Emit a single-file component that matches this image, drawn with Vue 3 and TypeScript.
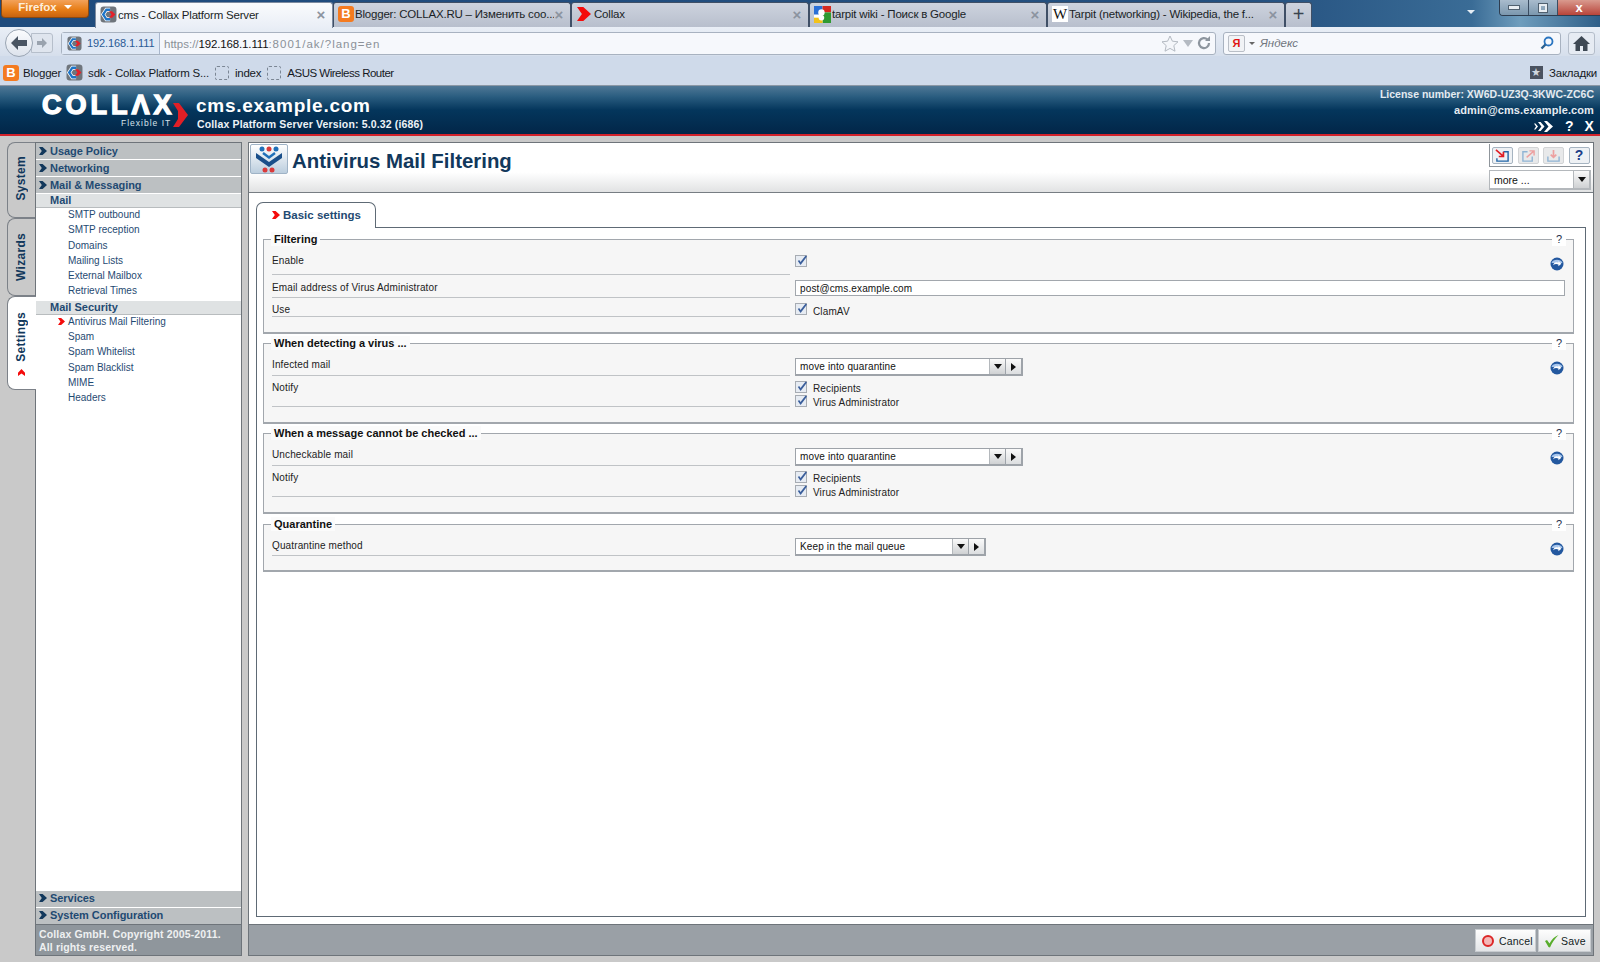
<script setup lang="ts">
interface Row { label: string; h: number; pad: number; type: string; value?: string; width?: number; top?: number }
interface Group { title: string; height: number; gap: number; rows: Row[] }
const browserTabs = [
  { title: 'cms - Collax Platform Server', icon: 'collax', active: true },
  { title: 'Blogger: COLLAX.RU – Изменить соо...', icon: 'blogger', active: false },
  { title: 'Collax', icon: 'red', active: false },
  { title: 'tarpit wiki - Поиск в Google', icon: 'google', active: false },
  { title: 'Tarpit (networking) - Wikipedia, the f...', icon: 'wiki', active: false },
]
const mailItems = ['SMTP outbound', 'SMTP reception', 'Domains', 'Mailing Lists', 'External Mailbox', 'Retrieval Times']
const securityItems = ['Antivirus Mail Filtering', 'Spam', 'Spam Whitelist', 'Spam Blacklist', 'MIME', 'Headers']
const groups: Group[] = [
  { title: 'Filtering', height: 95, gap: 9, rows: [
    { label: 'Enable', h: 35, pad: 15, type: 'check', top: 15 },
    { label: 'Email address of Virus Administrator', h: 23, pad: 7, type: 'input', value: 'post@cms.example.com', top: 5 },
    { label: 'Use', h: 19, pad: 6, type: 'checks', top: 6 },
  ] },
  { title: 'When detecting a virus ...', height: 81, gap: 9, rows: [
    { label: 'Infected mail', h: 32, pad: 15, type: 'select', value: 'move into quarantine', width: 228, top: 14 },
    { label: 'Notify', h: 31, pad: 6, type: 'notify', top: 5 },
  ] },
  { title: 'When a message cannot be checked ...', height: 81, gap: 10, rows: [
    { label: 'Uncheckable mail', h: 32, pad: 15, type: 'select', value: 'move into quarantine', width: 228, top: 14 },
    { label: 'Notify', h: 31, pad: 6, type: 'notify', top: 5 },
  ] },
  { title: 'Quarantine', height: 48, gap: 0, rows: [
    { label: 'Quatrantine method', h: 31, pad: 15, type: 'select', value: 'Keep in the mail queue', width: 191, top: 13 },
  ] },
]
</script>

<template>
  <div class="page">
    <svg class="defs" width="0" height="0">
      <symbol id="fav" viewBox="0 0 16 16">
        <rect x="0.5" y="0.5" width="15" height="15" rx="3" fill="#6f757c" />
        <path d="M9.500 3.500H6L3 8l3 4.500h3.500" fill="none" stroke="#fff" stroke-width="3.600" />
        <path d="M9.500 3.500H6L3 8l3 4.500h3.500" fill="none" stroke="#1c74c8" stroke-width="2.200" />
        <path d="M8.500 5h3L14.500 8l-3 3h-3L10.800 8z" fill="#e5202a" />
      </symbol>
      <symbol id="chev" viewBox="0 0 10 10">
        <path d="M0 0h4.500L10 5 4.500 10H0L3.500 5z" />
      </symbol>
      <symbol id="refresh" viewBox="0 0 14 14">
        <circle cx="7" cy="7" r="6.500" fill="#23589f" />
        <path d="M1.500 6C2.500 2 11 1.500 12.500 6z" fill="#a8c6ec" />
        <path d="M3.200 8.200C3.500 5.500 6.500 4.600 8.400 5.800V4.300l3 2.500-3 2.500V7.600C6.700 6.500 4.600 6.800 3.200 8.200z" fill="#fff" />
      </symbol>
      <symbol id="tick" viewBox="0 0 12 12">
        <path d="M2 6.500l1.500-1 1.400 2L10.500 0.500 12 1.500 5 11z" fill="#3b5f9c" />
      </symbol>
    </svg>

    <div class="tabbar">
      <div class="ffbtn"><span>Firefox</span><i class="caret white"></i></div>
      <div v-for="t in browserTabs" :key="t.title" class="btab" :class="{ active: t.active }">
        <svg v-if="t.icon === 'collax'" class="fav" viewBox="0 0 16 16"><use href="#fav" /></svg>
        <span v-else-if="t.icon === 'blogger'" class="blogger">B</span>
        <svg v-else-if="t.icon === 'red'" class="fav redc" viewBox="0 0 10 10" fill="#f40c0c"><use href="#chev" /></svg>
        <svg v-else-if="t.icon === 'google'" class="fav" viewBox="0 0 16 16">
          <rect width="16" height="16" rx="2" fill="#fff" />
          <rect x="0" y="0" width="8" height="8" fill="#2a6fd6" />
          <rect x="8" y="0" width="8" height="6" fill="#d62a20" />
          <rect x="8" y="6" width="8" height="10" fill="#2f9a32" />
          <rect x="0" y="11" width="8" height="5" fill="#f2c21a" />
          <circle cx="7" cy="6" r="3" fill="#fff" />
          <circle cx="7" cy="11" r="2.600" fill="#fff" />
        </svg>
        <span v-else class="wiki">W</span>
        <span class="btitle">{{ t.title }}</span>
        <span class="bclose">×</span>
      </div>
      <div class="newtab">+</div>
      <div class="tabspace"><i class="caret pale"></i></div>
      <div class="winbtns">
        <div class="wb"><i class="wmin"></i></div>
        <div class="wb"><i class="wmax"></i></div>
        <div class="wb close">x</div>
      </div>
    </div>

    <div class="navbar">
      <div class="navbtns">
        <div class="backbtn">
          <svg width="18" height="16" viewBox="0 0 18 16"><path d="M1 8l7-7v4h9v6H8v4z" fill="#4a5563" /></svg>
        </div>
        <div class="fwdbtn">
          <svg width="12" height="12" viewBox="0 0 12 12"><path d="M11 6L6 1v3H1v4h5v3z" fill="#9aa3ae" /></svg>
        </div>
      </div>
      <div class="urlbar">
        <div class="identity">
          <svg class="fav" viewBox="0 0 16 16"><use href="#fav" /></svg>
          <span>192.168.1.111</span>
        </div>
        <div class="url">https://<b>192.168.1.111</b><span class="tail">:8001/ak/?lang=en</span></div>
        <svg class="star" width="18" height="17" viewBox="0 0 18 17"><path d="M9 1l2.400 5.200 5.600.6-4.200 3.800 1.200 5.600L9 13.400 4 16.200l1.200-5.600L1 6.800l5.600-.6z" fill="#f4f6fa" stroke="#b4bac2" /></svg>
        <i class="caret urlcaret"></i>
        <svg class="reload" width="14" height="14" viewBox="0 0 14 14"><path d="M12 7a5 5 0 1 1-1.500-3.500" fill="none" stroke="#8d959e" stroke-width="2.200" /><path d="M8 5h5V0z" fill="#8d959e" /></svg>
      </div>
      <div class="search">
        <div class="yandex">Я</div>
        <i class="caret small"></i>
        <span class="yname">Яндекс</span>
        <svg class="glass" width="14" height="14" viewBox="0 0 14 14"><circle cx="8.500" cy="5.500" r="4" fill="none" stroke="#2a75c0" stroke-width="1.800" /><path d="M5.500 8.500L1.500 12.500" stroke="#2a6090" stroke-width="2.400" /></svg>
      </div>
      <div class="home">
        <svg width="17" height="15" viewBox="0 0 17 15"><path d="M8.500 0L0 8h2.500v7h4.500v-5h3v5h4.500V8H17z" fill="#3e4854" /></svg>
      </div>
    </div>

    <div class="bookbar">
      <span class="blogger bm">B</span><span class="bmtext">Blogger</span>
      <svg class="fav bm2" viewBox="0 0 16 16"><use href="#fav" /></svg><span class="bmtext">sdk - Collax Platform S...</span>
      <i class="dash"></i><span class="bmtext">index</span>
      <i class="dash"></i><span class="bmtext tight">ASUS Wireless Router</span>
      <div class="bmright">
        <span class="bmstar">★</span><span class="bmtext">Закладки</span>
      </div>
    </div>

    <header class="apphead">
      <div class="logo">
        <div class="logotext">COLLΛX</div>
        <div class="flex-it">Flexible IT</div>
        <svg class="logochev" width="15" height="24" viewBox="0 0 15 24"><path d="M0 0h6l9 12-9 12H0l5-8V8z" fill="#e01f26" /></svg>
      </div>
      <div class="hostblock">
        <div class="host">cms.example.com</div>
        <div class="version">Collax Platform Server Version: 5.0.32 (i686)</div>
      </div>
      <div class="headright">
        <div class="lic">License number: XW6D-UZ3Q-3KWC-ZC6C</div>
        <div>admin@cms.example.com</div>
        <div class="headicons">
          <svg width="20" height="11" viewBox="0 0 20 11" fill="#fff">
            <path d="M0 2.500h1.500L4 5.500l-2.500 3H0l2-3z" />
            <path d="M4 1h2.600L10.500 5.500 6.600 10H4L7.400 5.500z" />
            <path d="M10 0h3L19 5.500 13 11h-3L14.500 5.500z" />
          </svg>
          <span>?</span><span>X</span>
        </div>
      </div>
    </header>

    <div class="workspace">
      <div class="vtabs">
        <div class="vtab sys"><span>System</span></div>
        <div class="vtab wiz"><span>Wizards</span></div>
        <div class="vtab set"><span>Settings</span><svg class="vchev" width="7" height="7" viewBox="0 0 10 10" fill="#f40c0c"><use href="#chev" /></svg></div>
      </div>

      <aside class="side">
        <div class="shead"><svg width="8" height="8" viewBox="0 0 10 10" fill="#12385c"><use href="#chev" /></svg>Usage Policy</div>
        <div class="shead"><svg width="8" height="8" viewBox="0 0 10 10" fill="#12385c"><use href="#chev" /></svg>Networking</div>
        <div class="shead"><svg width="8" height="8" viewBox="0 0 10 10" fill="#12385c"><use href="#chev" /></svg>Mail &amp; Messaging</div>
        <div class="ssub">Mail</div>
        <div class="slist">
          <div v-for="i in mailItems" :key="i" class="sitem">{{ i }}</div>
        </div>
        <div class="ssub">Mail Security</div>
        <div class="slist">
          <div v-for="(i, n) in securityItems" :key="i" class="sitem">
            <svg v-if="n === 0" class="ichev" width="7" height="7" viewBox="0 0 10 10" fill="#f40c0c"><use href="#chev" /></svg>{{ i }}
          </div>
        </div>
        <div class="sfill"></div>
        <div class="shead low"><svg width="8" height="8" viewBox="0 0 10 10" fill="#12385c"><use href="#chev" /></svg>Services</div>
        <div class="shead low"><svg width="8" height="8" viewBox="0 0 10 10" fill="#12385c"><use href="#chev" /></svg>System Configuration</div>
        <div class="scopy">Collax GmbH. Copyright 2005-2011.<br />All rights reserved.</div>
      </aside>

      <main class="main">
        <div class="mhead">
          <div class="micon">
            <svg width="32" height="28" viewBox="0 0 32 28">
              <g fill="#1f6fb8"><circle cx="9" cy="4" r="2.500" /><circle cx="23" cy="4" r="2.500" /></g>
              <circle cx="16" cy="4" r="2.500" fill="#d93a3a" />
              <path d="M3 8l13 9 13-9v5L16 22 3 13z" fill="#1a4f8a" />
              <path d="M10 8l6 4.500L22 8" fill="none" stroke="#1f6fb8" stroke-width="2.400" />
              <circle cx="12" cy="25" r="2.500" fill="#d93a3a" /><circle cx="19" cy="25" r="2.500" fill="#d93a3a" />
            </svg>
          </div>
          <h1>Antivirus Mail Filtering</h1>
          <div class="mtools">
            <div class="toolrow">
              <div class="tool">
                <svg width="16" height="15" viewBox="0 0 16 15"><path d="M9 3h5v10H2v-3" fill="none" stroke="#2267a8" stroke-width="1.500" /><path d="M1 1l8 7M9 3v5H4" fill="none" stroke="#e01f26" stroke-width="1.800" /></svg>
              </div>
              <div class="tool dim">
                <svg width="16" height="15" viewBox="0 0 16 15"><path d="M7 3H2v10h10V8" fill="none" stroke="#8fb4d4" stroke-width="1.500" /><path d="M6 9l8-7M9 2h5v5" fill="none" stroke="#eda0a0" stroke-width="1.500" /></svg>
              </div>
              <div class="tool dim">
                <svg width="16" height="15" viewBox="0 0 16 15"><path d="M2 8v5h12V8" fill="none" stroke="#8fb4d4" stroke-width="1.500" /><path d="M8 1v8M5 6l3 3 3-3" fill="none" stroke="#eda0a0" stroke-width="1.800" /></svg>
              </div>
              <div class="tool q">?</div>
            </div>
            <div class="moresel"><span>more ...</span><b class="dropb"><i class="caret black"></i></b></div>
          </div>
        </div>

        <div class="mbody">
          <div class="ptab"><svg width="8" height="8" viewBox="0 0 10 10" fill="#f40c0c"><use href="#chev" /></svg>Basic settings</div>
          <div class="frame">
            <section v-for="g in groups" :key="g.title" class="fs" :style="{ height: g.height + 'px', marginBottom: g.gap + 'px' }">
              <div class="legend">{{ g.title }}</div>
              <div class="fq">?</div>
              <svg class="rf" width="14" height="14" viewBox="0 0 14 14"><use href="#refresh" /></svg>
              <div v-for="r in g.rows" :key="r.label" class="row" :style="{ height: r.h + 'px' }">
                <div class="lab" :style="{ paddingTop: r.pad + 'px' }">{{ r.label }}</div>
                <div class="ctl" :style="{ paddingTop: r.top + 'px' }">
                  <span v-if="r.type === 'check'" class="cb"><svg viewBox="0 0 12 12"><use href="#tick" /></svg></span>
                  <div v-else-if="r.type === 'input'" class="inp">{{ r.value }}</div>
                  <div v-else-if="r.type === 'checks'" class="chk up"><span class="cb"><svg viewBox="0 0 12 12"><use href="#tick" /></svg></span>ClamAV</div>
                  <div v-else-if="r.type === 'select'" class="sel" :style="{ width: r.width + 'px' }">
                    <span class="seltxt">{{ r.value }}</span>
                    <b class="dropb"><i class="caret black"></i></b>
                    <b class="gob"><i class="tri"></i></b>
                  </div>
                  <template v-else>
                    <div class="chk"><span class="cb"><svg viewBox="0 0 12 12"><use href="#tick" /></svg></span>Recipients</div>
                    <div class="chk"><span class="cb"><svg viewBox="0 0 12 12"><use href="#tick" /></svg></span>Virus Administrator</div>
                  </template>
                </div>
              </div>
            </section>
          </div>
        </div>

        <div class="mfoot">
          <div class="fbtn cancel"><i class="redo"></i>Cancel</div>
          <div class="fbtn save">
            <svg width="15" height="14" viewBox="0 0 15 14"><path d="M1 7l2-1 2.500 3.500C7.500 5.500 10.500 2.500 14.500 1 11 4.500 8 8.500 6 13.500L4.500 13z" fill="#58ad2c" /></svg>Save
          </div>
        </div>
      </main>
    </div>
  </div>
</template>

<style scoped>
.page { width: 1600px; height: 962px; display: flex; flex-direction: column; overflow: hidden; background: #c9c9c9; font-family: "Liberation Sans", Arial, sans-serif; color: #222; }
.defs { display: block; height: 0; width: 0; overflow: hidden; flex: none; }
i { display: block; }
.tabbar { height: 27px; flex: none; display: flex; align-items: flex-start; background: linear-gradient(90deg, #1f4b7d 0%, #24507f 78%, #3a6c96 92%, #6f9dbd 95%, #2e5e88 100%); position: relative; }
.ffbtn { width: 88px; height: 18px; margin: 0 6px 0 1px; flex: none; border-radius: 0 0 4px 4px; background: linear-gradient(#f3a25a, #e77e18 55%, #c8630f); border: 1px solid #8a4a12; border-top: 0; box-sizing: border-box; color: #fdeedd; font-size: 11.500px; font-weight: bold; display: flex; align-items: center; justify-content: center; gap: 7px; padding-bottom: 3px; }
.caret { width: 0; height: 0; border-left: 4px solid transparent; border-right: 4px solid transparent; border-top: 4px solid #666; }
.caret.white { border-top-color: #fff; }
.caret.pale { border-top-color: #e6eef5; }
.caret.small { border-left-width: 3px; border-right-width: 3px; border-top-width: 3px; margin: 0 5px 0 4px; }
.caret.black { border-left-width: 4px; border-right-width: 4px; border-top: 5px solid #111; }
.btab { width: 238px; height: 25px; margin-top: 2px; flex: none; box-sizing: border-box; display: flex; align-items: center; padding: 0 5px 2px 4px; font-size: 11.500px; letter-spacing: -0.200px; color: #1a1f26; background: linear-gradient(#cdd3de, #b8bfcd); border: 1px solid #3f4f66; border-bottom: 0; border-radius: 3px 3px 0 0; }
.btab.active { background: linear-gradient(#fafbfd, #e9eef6); height: 26px; border-color: #7d8ba0; }
.btitle { flex: 1; white-space: nowrap; overflow: hidden; margin-left: 1px; }
.bclose { color: #8b93a0; font-size: 15px; font-weight: bold; margin-right: 2px; line-height: 1; }
.fav { width: 17px; height: 17px; flex: none; }
.fav.redc { width: 14px; height: 14px; margin: 0 2px 0 1px; }
.blogger { width: 16px; height: 16px; flex: none; background: #f47b20; border-radius: 3px; color: #fff; font-weight: bold; font-size: 13px; line-height: 16px; text-align: center; letter-spacing: 0; }
.wiki { width: 16px; height: 16px; flex: none; background: #fff; font-family: "Liberation Serif", serif; font-size: 15px; line-height: 16px; text-align: center; color: #111; letter-spacing: 0; }
.newtab { width: 27px; height: 25px; margin-top: 2px; flex: none; box-sizing: border-box; background: linear-gradient(#cdd3de, #b8bfcd); border: 1px solid #3f4f66; border-bottom: 0; border-radius: 3px 3px 0 0; text-align: center; font-size: 20px; line-height: 22px; color: #3a434f; }
.tabspace { flex: 1; display: flex; justify-content: flex-end; padding: 10px 24px 0 0; }
.winbtns { width: 101px; height: 16px; margin-right: 0; flex: none; display: flex; border: 1px solid #2e3d50; border-top: 0; border-right: 0; border-radius: 0 0 0 4px; box-sizing: border-box; overflow: hidden; }
.wb { width: 28px; height: 15px; background: linear-gradient(#a9bccd, #7b97ae); border-right: 1px solid #3a4d62; display: flex; align-items: center; justify-content: center; }
.wb.close { flex: 1; border: 0; background: linear-gradient(#d99a8e, #b8443a); color: #fff; font-weight: bold; font-size: 13px; line-height: 13px; }
.wmin { width: 10px; height: 3px; background: #e8edf2; border: 1px solid #50606f; }
.wmax { width: 8px; height: 8px; border: 2px solid #e8edf2; outline: 1px solid #50606f; box-sizing: border-box; }
.navbar { height: 29px; flex: none; display: flex; align-items: center; box-sizing: border-box; padding: 3px 0 0 5px; background: linear-gradient(#e9eef6, #d6dfec); }
.navbtns { display: flex; align-items: center; width: 56px; flex: none; }
.backbtn { width: 26px; height: 26px; border-radius: 50%; background: linear-gradient(#fbfcfe, #dde3ec); border: 1px solid #9aa5b3; display: flex; align-items: center; justify-content: center; flex: none; position: relative; z-index: 1; }
.fwdbtn { width: 22px; height: 20px; margin-left: -2px; background: #dfe5ee; border: 1px solid #b6bfcb; border-radius: 0 3px 3px 0; display: flex; align-items: center; justify-content: center; box-sizing: border-box; }
.urlbar { width: 1155px; height: 23px; flex: none; box-sizing: border-box; display: flex; align-items: center; border: 1px solid #a8b2c0; border-radius: 3px; background: #f6f8fc; font-size: 11.500px; }
.identity { display: flex; align-items: center; gap: 5px; width: 98px; padding-left: 5px; box-sizing: border-box; height: 21px; background: #dfe8f5; border-right: 1px solid #a8b6cc; color: #2a5a94; font-size: 11px; flex: none; letter-spacing: -0.100px; }
.identity .fav { width: 15px; height: 15px; }
.url { flex: 1; padding: 1px 0 0 4px; color: #8b9198; white-space: nowrap; font-size: 11.500px; }
.url b { font-weight: normal; color: #111; letter-spacing: -0.150px; }
.tail { letter-spacing: 1px; }
.star { margin-right: 4px; flex: none; }
.urlcaret { border-top-color: #b4bac2; border-top-width: 7px; border-left-width: 5px; border-right-width: 5px; margin-right: 4px; }
.reload { margin-right: 4px; flex: none; }
.search { width: 338px; height: 23px; margin-left: 7px; flex: none; box-sizing: border-box; display: flex; align-items: center; border: 1px solid #a8b2c0; border-radius: 3px; background: #f6f8fc; padding: 0 6px 0 4px; }
.yandex { width: 15px; height: 15px; background: #f1f3f6; border: 1px solid #b9bec6; border-radius: 2px; color: #e01414; font-weight: bold; font-size: 11px; line-height: 14px; text-align: center; }
.yname { flex: 1; font-style: italic; font-size: 11.500px; color: #70767e; }
.home { width: 27px; height: 23px; margin-left: 7px; box-sizing: border-box; border: 1px solid #b4bdca; border-radius: 3px; background: #e6ebf3; display: flex; align-items: center; justify-content: center; flex: none; }
.bookbar { height: 30px; flex: none; display: flex; align-items: center; box-sizing: border-box; padding: 4px 0 0 3px; background: #cfdaea; border-bottom: 1px solid #8b97a5; font-size: 11.500px; letter-spacing: -0.220px; color: #15191f; }
.bm { margin-right: 4px; }
.bmtext { white-space: nowrap; }
.bmtext.tight { letter-spacing: -0.500px; }
.bm2 { margin: 0 5px 0 5px; }
.dash { width: 12px; height: 12px; border: 1px dashed #7b8694; border-radius: 2px; margin: 0 6px 0 6px; flex: none; }
.bmright { margin-left: auto; display: flex; align-items: center; gap: 6px; padding-right: 3px; }
.bmstar { width: 13px; height: 13px; background: #4a5260; color: #cfd5de; font-size: 11px; line-height: 13px; text-align: center; letter-spacing: 0; }
.apphead { height: 50px; flex: none; box-sizing: border-box; display: flex; color: #fff; background: linear-gradient(#4f7896 0%, #2a5d80 22%, #04365c 50%, #022648 100%); border-bottom: 2px solid #d3222a; position: relative; }
.logo { width: 196px; flex: none; padding: 6px 0 0 42px; box-sizing: border-box; position: relative; }
.logotext { font-size: 27px; font-weight: bold; line-height: 26px; letter-spacing: 4px; -webkit-text-stroke: 1.400px #fff; white-space: nowrap; }
.flex-it { font-size: 8.500px; letter-spacing: 1px; margin: 1px 0 0 79px; line-height: 9px; color: #d8e2ea; white-space: nowrap; }
.logochev { position: absolute; left: 173px; top: 17px; }
.hostblock { padding-top: 9px; }
.host { font-size: 19px; font-weight: bold; line-height: 22px; letter-spacing: 0.730px; }
.version { font-size: 10.500px; font-weight: bold; line-height: 14px; margin: 0 0 0 1px; letter-spacing: 0.150px; color: #eef3f7; }
.headright { margin-left: auto; padding: 1px 6px 0 0; text-align: right; font-size: 11px; font-weight: bold; line-height: 15.500px; color: #e4ebf1; letter-spacing: 0.100px; }
.lic { font-size: 10.500px; letter-spacing: 0; }
.headicons { display: flex; justify-content: flex-end; align-items: center; gap: 11px; font-size: 14px; line-height: 16px; color: #fff; }
.workspace { flex: 1; min-height: 0; display: flex; padding: 6px 6px 6px 7px; }
.vtabs { width: 28px; flex: none; display: flex; flex-direction: column; }
.vtab { box-sizing: border-box; width: 28px; border: 1px solid #7c8188; border-right: 0; border-radius: 8px 0 0 8px; display: flex; flex-direction: column; align-items: center; justify-content: flex-start; background: #c9c9c9; padding-right: 2px; }
.vtab span { writing-mode: vertical-rl; transform: rotate(180deg); font-size: 12px; font-weight: bold; color: #12385c; letter-spacing: 0.300px; }
.sys { height: 76px; padding-top: 13px; }
.wiz { height: 78px; padding-top: 14px; }
.set { height: 94px; background: #fff; padding-top: 15px; position: relative; z-index: 1; margin-right: -1px; width: 29px; }
.vchev { margin-top: 7px; transform: rotate(-90deg); }
.side { width: 207px; flex: none; box-sizing: border-box; display: flex; flex-direction: column; background: #fff; border: 1px solid #6e747a; margin-right: 6px; }
.shead { height: 17px; box-sizing: border-box; background: #bcc0c2; border-bottom: 1px solid #fff; display: flex; align-items: center; gap: 3px; padding: 0 0 1px 3px; font-size: 11px; font-weight: bold; color: #1f4a72; letter-spacing: -0.050px; flex: none; }
.shead.low { border-bottom: 0; border-top: 1px solid #fff; padding-bottom: 2px; }
.ssub { height: 14px; flex: none; box-sizing: border-box; background: #dfe2e3; border-bottom: 1px solid #b8bcbe; padding-left: 14px; font-size: 11px; font-weight: bold; color: #1f4a72; line-height: 13px; }
.slist { padding: 0 0 1px; }
.sitem { height: 15.300px; line-height: 14.500px; padding-left: 32px; font-size: 10px; color: #1f4a72; position: relative; white-space: nowrap; }
.ichev { position: absolute; left: 22px; top: 3px; }
.sfill { flex: 1; }
.scopy { height: 31px; flex: none; box-sizing: border-box; background: #8f969c; color: #eef0f1; font-size: 10.500px; font-weight: bold; line-height: 13px; padding: 3px 0 0 3px; letter-spacing: 0.150px; border-top: 1px solid #6e747a; }
.main { flex: 1; min-width: 0; box-sizing: border-box; display: flex; flex-direction: column; border: 1px solid #6e747a; background: #fff; }
.mhead { height: 50px; flex: none; box-sizing: border-box; display: flex; align-items: flex-start; padding: 1px 2px 0 1px; background: linear-gradient(#fff 60%, #e1e2e3); border-bottom: 1px solid #777d83; }
.micon { width: 38px; height: 30px; flex: none; box-sizing: border-box; border: 1px solid #9fb3c6; border-radius: 2px; background: linear-gradient(#fff, #bccede); display: flex; justify-content: center; }
h1 { margin: 4px 0 0 4px; font-size: 20.400px; line-height: 26px; font-weight: bold; color: #12385c; white-space: nowrap; }
.mtools { margin-left: auto; width: 102px; }
.toolrow { height: 23px; box-sizing: border-box; display: flex; gap: 4.500px; padding: 3px 0 0 2px; border: 1px solid #8f959b; border-width: 0 0 1px 1px; }
.tool { width: 21px; height: 17px; box-sizing: border-box; background: #eef1f4; border: 1px solid #a6b4c1; border-radius: 2px; display: flex; align-items: center; justify-content: center; flex: none; }
.tool svg { width: 15px; height: 14px; }
.tool.dim { background: #e8e9ea; border-color: #d2d4d6; }
.tool.q { color: #1d3f8a; font-weight: bold; font-size: 14px; line-height: 15px; }
.moresel { height: 20px; margin-top: 3px; box-sizing: border-box; display: flex; align-items: center; justify-content: space-between; border: 1px solid #b4b8bc; border-width: 1px 2px 2px 1px; background: #fff; font-size: 10.500px; padding-left: 4px; color: #111; }
.dropb { width: 16px; height: 100%; background: linear-gradient(#fafafa, #cfd1d3); border-left: 1px solid #b4b8bc; display: flex; align-items: center; justify-content: center; box-sizing: border-box; flex: none; }
.mbody { flex: 1; min-height: 0; box-sizing: border-box; padding: 9px 7px 7px 7px; display: flex; flex-direction: column; background: #fff; }
.ptab { width: 120px; height: 26px; flex: none; box-sizing: border-box; border: 1px solid #5e6a75; border-bottom: 0; border-radius: 7px 7px 0 0; display: flex; align-items: center; gap: 3px; padding: 0 0 2px 15px; font-size: 11.500px; font-weight: bold; color: #1f4a72; background: #fff; position: relative; z-index: 1; margin-bottom: -1px; }
.frame { flex: 1; min-height: 0; box-sizing: border-box; border: 1px solid #5e6a75; padding: 11px 11px 0 6px; background: #fff; }
.fs { box-sizing: border-box; position: relative; background: #f6f6f6; border: 1px solid #a2a7ad; border-bottom-width: 2px; padding: 0 0 0 8px; }
.legend { position: absolute; left: 7px; top: -8px; padding: 0 3px; background: #fbfbfb; font-size: 11px; line-height: 14px; font-weight: bold; color: #111; white-space: nowrap; }
.fq { position: absolute; right: 7px; top: -8px; padding: 0 4px; background: #fff; font-size: 11px; line-height: 14px; color: #1d2f4a; }
.rf { position: absolute; right: 9px; top: 17px; }
.row { display: flex; }
.lab { width: 518px; flex: none; box-sizing: border-box; border-bottom: 1px solid #c0c3c6; font-size: 10px; color: #222; letter-spacing: 0.130px; white-space: nowrap; }
.ctl { margin-left: 5px; font-size: 10px; color: #222; flex: 1; min-width: 0; letter-spacing: 0.130px; }
.cb { display: block; width: 12px; height: 12px; box-sizing: border-box; background: #e7ecf3; border: 1px solid #a7acb3; flex: none; }
.cb svg { display: block; width: 11px; height: 11px; margin: -1px 0 0 0; }
.inp { width: 770px; height: 16px; box-sizing: border-box; background: #fff; border: 1px solid #a2a7ad; padding-left: 4px; line-height: 15px; color: #111; }
.chk { display: flex; height: 13.500px; gap: 6px; line-height: 15px; }
.chk.up .cb { margin-top: -1px; }
.sel { height: 18px; box-sizing: border-box; display: flex; border: 1px solid #9ea3a9; border-width: 1px 2px 2px 1px; background: #fff; color: #111; line-height: 15px; }
.seltxt { flex: 1; padding-left: 4px; white-space: nowrap; }
.gob { width: 15px; flex: none; background: linear-gradient(#fafafa, #dcdee0); border-left: 1px solid #9ea3a9; display: flex; align-items: center; justify-content: center; }
.tri { width: 0; height: 0; border-top: 4px solid transparent; border-bottom: 4px solid transparent; border-left: 5px solid #111; }
.mfoot { height: 31px; flex: none; box-sizing: border-box; display: flex; justify-content: flex-end; gap: 2px; padding: 4px 2px 0 0; background: #9aa0a6; border-top: 1px solid #6e747a; }
.fbtn { height: 23px; box-sizing: border-box; display: flex; align-items: center; background: linear-gradient(#fdfdfd, #e3e5e7); border: 1px solid #c7cbcf; font-size: 10.500px; color: #122; letter-spacing: 0.200px; }
.cancel { width: 61px; padding-left: 6px; gap: 5px; }
.save { width: 53px; padding-left: 5px; gap: 2px; }
.redo { width: 12px; height: 12px; border-radius: 50%; background: #f4b6b6; border: 2px solid #dc2626; box-sizing: border-box; flex: none; }
</style>
